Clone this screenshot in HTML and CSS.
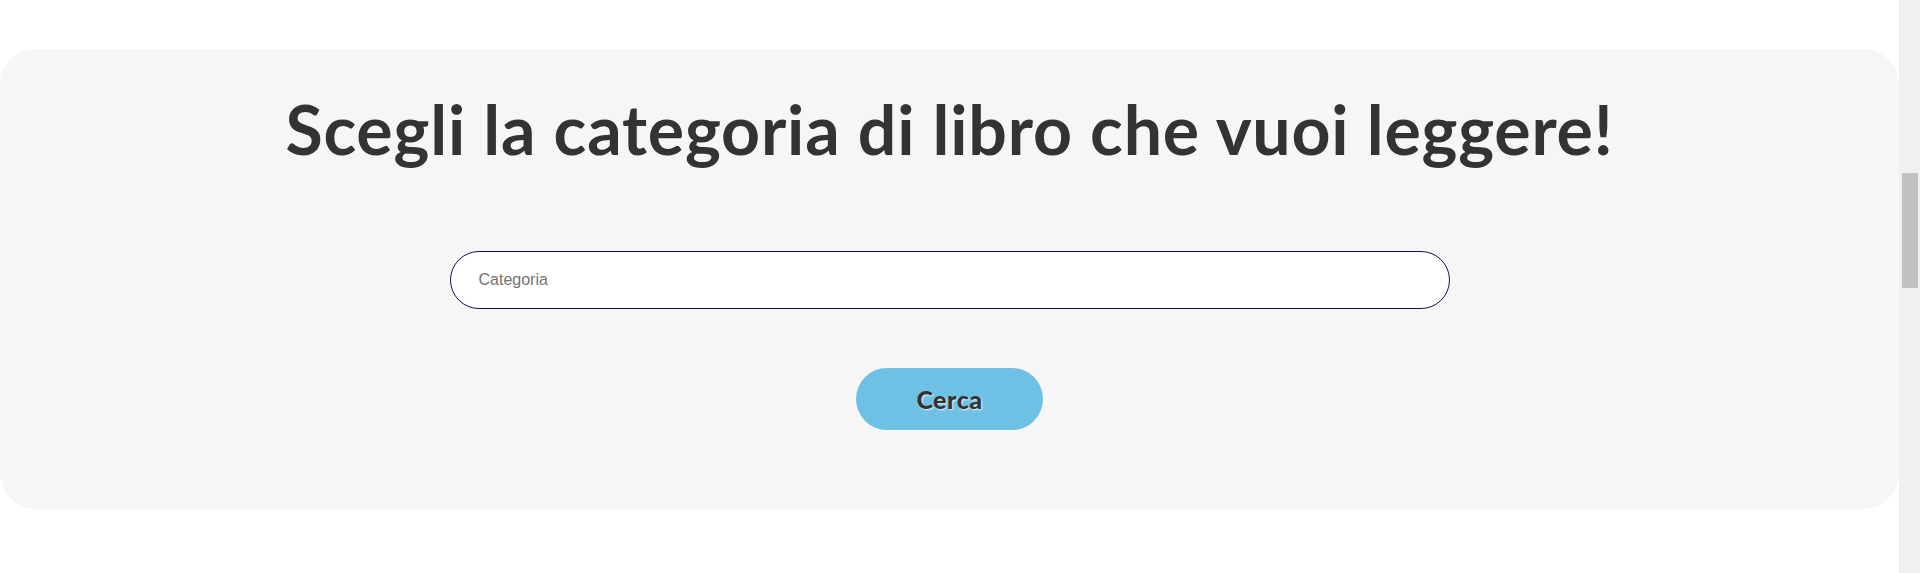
FILE: index.html
```html
<!DOCTYPE html>
<html lang="it">
<head>
<meta charset="utf-8">
<title>Scegli la categoria</title>
<link rel="stylesheet" href="styles.css">
</head>
<body>
<div class="window">
  <main class="page">
    <section class="panel">
      <h1 class="title">Scegli la categoria di libro che vuoi leggere!</h1>
      <form class="search" onsubmit="return false;">
        <input class="search-input" type="text" placeholder="Categoria">
        <button class="search-btn" type="submit">Cerca</button>
      </form>
    </section>
  </main>
  <div class="scrollbar" aria-hidden="true">
    <div class="scrollbar-thumb"></div>
  </div>
</div>
</body>
</html>
```
FILE: styles.css
```css
html,
body {
  height: 100%;
  margin: 0;
  overflow: hidden;
  background: #ffffff;
}
body {
  font-family: "Lato", "Liberation Sans", sans-serif;
  color: #333333;
}
.window {
  display: flex;
  height: 100vh;
}
.page {
  flex: 1;
  min-width: 0;
  padding-top: 49px;
}
.scrollbar {
  width: 21px;
  flex: none;
  background: #f0f0f0;
  padding: 173px 2px 0 3px;
  box-sizing: border-box;
}
.scrollbar-thumb {
  height: 115px;
  background: #c1c1c1;
}
.panel {
  background: #f6f6f6;
  border-radius: 36px;
  padding: 40px 0 79px;
  display: flex;
  flex-direction: column;
  align-items: center;
}
.title {
  margin: 0;
  font-size: 68px;
  line-height: 80px;
  letter-spacing: 0.8px;
  font-weight: 700;
  color: #333333;
  text-align: center;
}
.search {
  margin-top: 82px;
  display: flex;
  flex-direction: column;
  align-items: center;
  gap: 59px;
}
.search-input {
  box-sizing: border-box;
  width: 1000px;
  height: 58px;
  border: 1px solid #24074f;
  border-radius: 29px;
  background: #ffffff;
  padding: 0 28px;
  font-family: "Liberation Sans", Arial, sans-serif;
  font-size: 16px;
  color: #333333;
  outline: none;
}
.search-input::placeholder {
  color: #757575;
}
.search-btn {
  box-sizing: border-box;
  width: 187px;
  height: 62px;
  border: none;
  border-radius: 31px;
  background: #6ec0e4;
  font-family: "Lato", "Liberation Sans", sans-serif;
  font-weight: 900;
  font-size: 25px;
  letter-spacing: 0.5px;
  color: #333333;
  text-shadow: 1px 1px 2px rgba(255, 255, 255, 0.85);
  cursor: pointer;
}
```
